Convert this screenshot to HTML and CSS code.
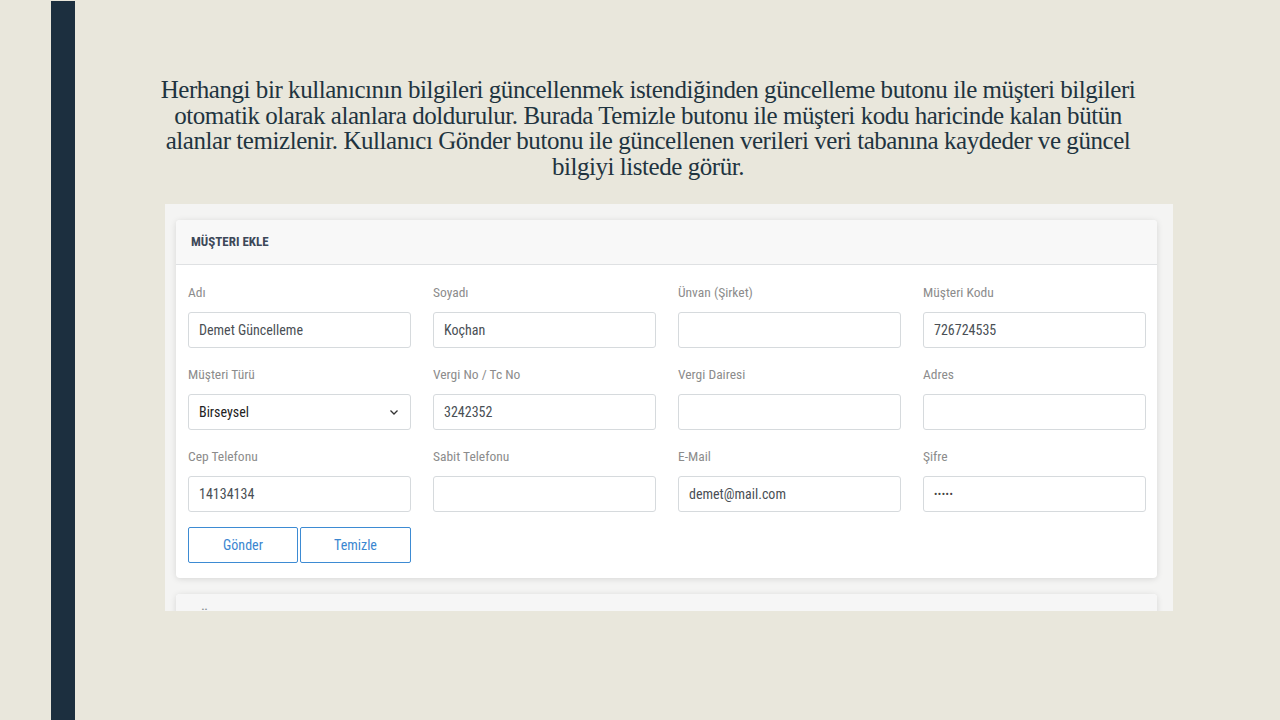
FILE: index.html
```html
<!DOCTYPE html>
<html lang="tr">
<head>
<meta charset="utf-8">
<title>Müşteri Ekle</title>
<link rel="stylesheet" href="styles.css">
</head>
<body>
<div class="slide">
  <div class="bar"></div>
  <div class="content">
    <p class="desc">Herhangi bir kullanıcının bilgileri güncellenmek istendiğinden güncelleme butonu ile müşteri bilgileri otomatik olarak alanlara doldurulur. Burada Temizle butonu ile müşteri kodu haricinde kalan bütün alanlar temizlenir. Kullanıcı Gönder butonu ile güncellenen verileri veri tabanına kaydeder ve güncel bilgiyi listede görür.</p>
    <div class="shot">
      <div class="card">
        <div class="card-header">MÜŞTERI EKLE</div>
        <div class="card-body">
          <div class="grid">
            <div class="field"><label>Adı</label><div class="input">Demet Güncelleme</div></div>
            <div class="field"><label>Soyadı</label><div class="input">Koçhan</div></div>
            <div class="field"><label>Ünvan (Şirket)</label><div class="input"></div></div>
            <div class="field"><label>Müşteri Kodu</label><div class="input">726724535</div></div>
            <div class="field"><label>Müşteri Türü</label><div class="input select"><span>Birseysel</span><svg width="10" height="7" viewBox="0 0 10 7"><path d="M1.5 1.5 L5 5 L8.5 1.5" fill="none" stroke="#333" stroke-width="1.3"/></svg></div></div>
            <div class="field"><label>Vergi No / Tc No</label><div class="input">3242352</div></div>
            <div class="field"><label>Vergi Dairesi</label><div class="input"></div></div>
            <div class="field"><label>Adres</label><div class="input"></div></div>
            <div class="field"><label>Cep Telefonu</label><div class="input">14134134</div></div>
            <div class="field"><label>Sabit Telefonu</label><div class="input"></div></div>
            <div class="field"><label>E-Mail</label><div class="input">demet@mail.com</div></div>
            <div class="field"><label>Şifre</label><div class="input pass">•••••</div></div>
          </div>
          <div class="buttons">
            <button class="btn">Gönder</button>
            <button class="btn">Temizle</button>
          </div>
        </div>
      </div>
      <div class="card card2">
        <div class="card-header">MÜŞTERI LISTESI</div>
      </div>
    </div>
  </div>
</div>
</body>
</html>
```
FILE: styles.css
```css
html, body {
  margin: 0;
  padding: 0;
  background: #e9e7dc;
}
.slide {
  display: flex;
  width: 1280px;
  height: 720px;
  overflow: hidden;
}
.bar {
  width: 24px;
  margin-left: 51px;
  margin-top: 1px;
  background: #1c2f3f;
  flex: none;
}
.content {
  flex: 1;
  display: flex;
  flex-direction: column;
}
.desc {
  margin: 77px 0 0 68px;
  width: 1010px;
  font-family: "Liberation Serif", "Times New Roman", serif;
  font-size: 25px;
  line-height: 25.5px;
  letter-spacing: -0.45px;
  text-align: center;
  color: #1f3440;
}
.shot {
  margin: 25px 0 0 90px;
  width: 1008px;
  height: 407px;
  background: #f4f4f3;
  overflow: hidden;
  padding: 16px 16px 0 11px;
  box-sizing: border-box;
  font-family: "Liberation Sans Narrow", "Roboto Condensed", "Liberation Sans", Arial, sans-serif;
}
.card {
  background: #fff;
  border-radius: 4px;
  box-shadow: 0 1px 6px rgba(0,0,0,0.12);
}
.card-header {
  height: 45px;
  box-sizing: border-box;
  padding: 14px 15px 0 15px;
  background: #f8f8f8;
  border-bottom: 1px solid #dfe1e3;
  border-radius: 4px 4px 0 0;
  font-size: 13px;
  font-weight: bold;
  color: #3d4858;
}
.card-body {
  padding: 19px 11px 15px 12px;
}
.grid {
  display: grid;
  grid-template-columns: repeat(4, 223px);
  column-gap: 22px;
}
.field {
  display: flex;
  flex-direction: column;
  margin-bottom: 18px;
}
.field label {
  font-size: 13.5px;
  line-height: 16px;
  color: #8c8c8c;
  margin-bottom: 12px;
}
.input {
  height: 36px;
  box-sizing: border-box;
  border: 1px solid #d6dadd;
  border-radius: 3px;
  padding: 0 10px;
  display: flex;
  align-items: center;
  font-size: 14px;
  color: #4a4f55;
}
.select {
  justify-content: space-between;
  color: #222;
  padding-right: 11px;
}
.pass {
  font-size: 10px;
  letter-spacing: 0.5px;
  color: #444;
}
.buttons {
  display: flex;
  gap: 2px;
  margin-top: -3px;
}
.btn {
  width: 110px;
  height: 36px;
  background: #fff;
  border: 1px solid #3d8bd3;
  border-radius: 2px;
  color: #3a86d0;
  font-family: inherit;
  font-size: 14px;
  padding: 0;
}
.btn + .btn {
  width: 111px;
}
.card2 {
  margin-top: 16px;
  height: 60px;
}
.card2 .card-header {
  background: #f6f6f6;
  border-bottom: none;
  color: #8a8f95;
}
```
